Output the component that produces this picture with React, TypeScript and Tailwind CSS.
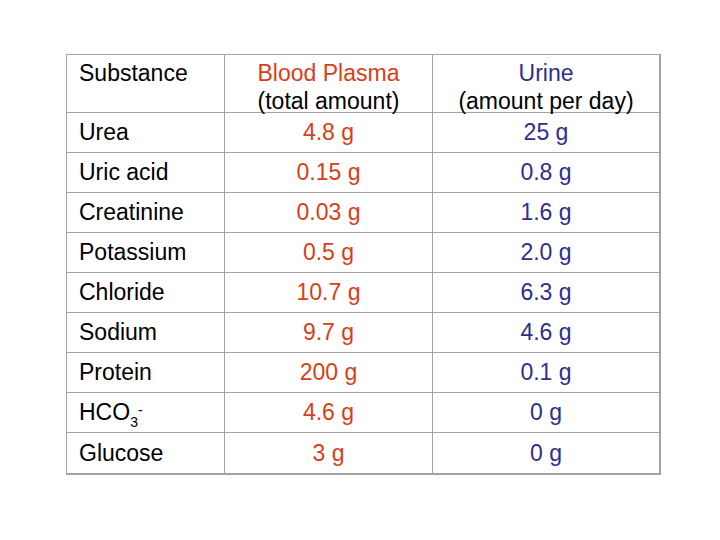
const rows: { name: React.ReactNode; plasma: string; urine: string }[] = [
  { name: "Urea", plasma: "4.8 g", urine: "25 g" },
  { name: "Uric acid", plasma: "0.15 g", urine: "0.8 g" },
  { name: "Creatinine", plasma: "0.03 g", urine: "1.6 g" },
  { name: "Potassium", plasma: "0.5 g", urine: "2.0 g" },
  { name: "Chloride", plasma: "10.7 g", urine: "6.3 g" },
  { name: "Sodium", plasma: "9.7 g", urine: "4.6 g" },
  { name: "Protein", plasma: "200 g", urine: "0.1 g" },
  {
    name: (
      <span>
        HCO<span className="relative top-[7px] text-[14px]">3</span>
        <span className="relative -top-[5px] text-[14px]">-</span>
      </span>
    ),
    plasma: "4.6 g",
    urine: "0 g",
  },
  { name: "Glucose", plasma: "3 g", urine: "0 g" },
]

export default function App() {
  return (
    <div className="w-[720px] h-[540px] bg-white pt-[54px] pl-[66px] font-['Liberation_Sans',Arial,sans-serif] text-[23px] text-black">
      <div className="w-[595px] border-l border-t border-r-2 border-b-2 border-[#a3a3a3]">
        <div className="flex h-[58px] border-b border-[#a3a3a3] leading-[28px]">
          <div className="w-[158px] shrink-0 border-r border-[#a3a3a3] pl-[12px] pt-[4px]">Substance</div>
          <div className="w-[208px] shrink-0 border-r border-[#a3a3a3] pt-[4px] text-center">
            <div className="text-[#d63f18]">Blood Plasma</div>
            <div className="relative z-10">(total amount)</div>
          </div>
          <div className="flex-1 pt-[4px] text-center">
            <div className="text-[#2e2e8e]">Urine</div>
            <div className="relative z-10">(amount per day)</div>
          </div>
        </div>
        {rows.map((r, i) => (
          <div
            key={i}
            className={`flex h-[40px] items-center ${i < rows.length - 1 ? "border-b border-[#a3a3a3]" : ""}`}
          >
            <div className="w-[158px] shrink-0 h-full flex items-center border-r border-[#a3a3a3] pl-[12px]">{r.name}</div>
            <div className="w-[208px] shrink-0 h-full flex items-center justify-center border-r border-[#a3a3a3] text-[#d63f18]">
              {r.plasma}
            </div>
            <div className="flex-1 h-full flex items-center justify-center text-[#2e2e8e]">{r.urine}</div>
          </div>
        ))}
      </div>
    </div>
  )
}
